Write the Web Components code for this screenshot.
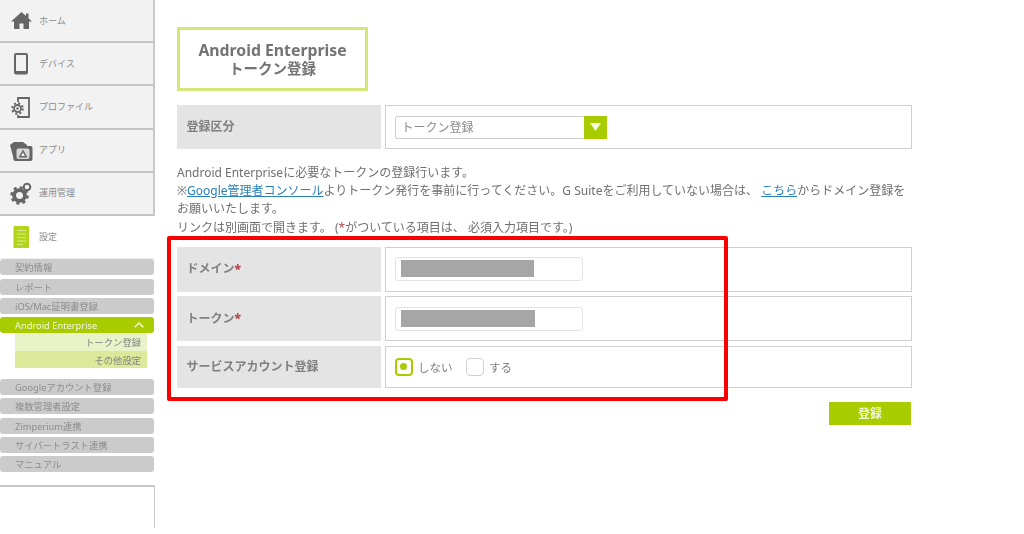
<!DOCTYPE html>
<html lang="ja">
<head>
<meta charset="utf-8">
<title>Android Enterprise トークン登録</title>
<style>
html, body { margin: 0; background: #fff; }
body { font-family: "Noto Sans", "Noto Sans CJK JP", sans-serif; color: #7d7d7d; }
note-text a { color: #2a80b9; text-decoration: underline; }
note-text b { color: #b5484c; font-weight: 400; }
page-title span { font-size: 15.800px; }
</style>
</head>
<body>
<app-shell>
  <side-nav slot="side">
    <nav-item label="ホーム"><svg viewBox="0 0 24 24" width="24" height="24"><path fill="#666" d="M12.500 3 2 12.500h3V20h5.500v-5.500h4V20H20v-7.500h3l-3.500-3.200V4.500h-2.500v2.500z"/></svg></nav-item>
    <nav-item label="デバイス"><svg viewBox="0 0 24 24" width="24" height="24"><rect x="6" y="2" width="12" height="19.500" rx="1" fill="none" stroke="#666" stroke-width="2"/><rect x="7" y="19" width="10" height="2" fill="#666"/></svg></nav-item>
    <nav-item label="プロファイル"><svg viewBox="0 0 24 24" width="24" height="24"><path fill="none" stroke="#666" stroke-width="1.800" d="M9 7V3h11v19H9v-2"/><circle cx="8.500" cy="13.500" r="5.300" fill="none" stroke="#666" stroke-width="2" stroke-dasharray="2.080 2.080"/><circle cx="8.500" cy="13.500" r="3.500" fill="#f2f2f2" stroke="#666" stroke-width="1.800"/><circle cx="8.500" cy="13.500" r="1.200" fill="#666"/></svg></nav-item>
    <nav-item label="アプリ"><svg viewBox="0 0 24 24" width="24" height="24"><path fill="#666" d="M1 7 5 4h9l4 3v3H7l1 12H5z"/><rect x="4.500" y="8" width="19" height="15" rx="2" fill="#666"/><rect x="7.500" y="10.500" width="13" height="10.500" rx="2" fill="#d8d8d8"/><path d="M14 11.500 18.500 19.500h-9z" fill="#666"/><path d="M14 14.500 16 18h-4z" fill="#f2f2f2"/></svg></nav-item>
    <nav-item label="運用管理"><svg viewBox="0 0 24 24" width="24" height="24"><circle cx="10.500" cy="14.500" r="8" fill="none" stroke="#666" stroke-width="2.500" stroke-dasharray="3.140 3.140"/><circle cx="10.500" cy="14.500" r="5.400" fill="none" stroke="#666" stroke-width="3.800"/><circle cx="18" cy="6" r="3.300" fill="none" stroke="#666" stroke-width="2"/></svg></nav-item>
    <nav-item label="設定" current><svg viewBox="0 0 24 24" width="24" height="24"><rect x="4.500" y="1" width="15.500" height="22" rx="1" fill="#b2d41a"/><path stroke="#dbe98c" stroke-width="1.200" d="M8 5.500h9M8 9h9M8 12.500h9M8 16h9M8 19.500h6"/></svg></nav-item>
    <nav-sub>契約情報</nav-sub>
    <nav-sub>レポート</nav-sub>
    <nav-sub>iOS/Mac証明書登録</nav-sub>
    <nav-sub open>Android Enterprise</nav-sub>
    <nav-leaf tone="light">トークン登録</nav-leaf>
    <nav-leaf tone="mid">その他設定</nav-leaf>
    <nav-sub after-group>Googleアカウント登録</nav-sub>
    <nav-sub>複数管理者設定</nav-sub>
    <nav-sub>Zimperium連携</nav-sub>
    <nav-sub>サイバートラスト連携</nav-sub>
    <nav-sub>マニュアル</nav-sub>
    <nav-foot></nav-foot>
  </side-nav>

  <page-title><span>Android Enterprise</span><br>トークン登録</page-title>

  <form-row label="登録区分" height="44">
    <select-box>トークン登録</select-box>
  </form-row>

  <note-text>
    Android Enterpriseに必要なトークンの登録行います。<br>
    ※<a href="#">Google管理者コンソール</a>よりトークン発行を事前に行ってください。G Suiteをご利用していない場合は、 <a href="#">こちら</a>からドメイン登録を<br>
    お願いいたします。<br>
    リンクは別画面で開きます。 (<b>*</b>がついている項目は、 必須入力項目です。)
  </note-text>

  <form-row label="ドメイン" required height="45">
    <text-field mask="133"></text-field>
  </form-row>
  <form-row label="トークン" required height="45">
    <text-field mask="134"></text-field>
  </form-row>
  <form-row label="サービスアカウント登録" height="42">
    <radio-opt checked>しない</radio-opt>
    <radio-opt>する</radio-opt>
  </form-row>

  <submit-button>登録</submit-button>
  <mark-box></mark-box>
</app-shell>

<script>
function shadow(el, html) {
    el.attachShadow({ mode: 'open' }).innerHTML = html;
}

class AppShell extends HTMLElement {
    constructor() {
        super();
        shadow(this, `
        <style>
        :host { display: flex; width: 1024px; height: 534px; overflow: hidden; filter: blur(.4px); }
        .side { flex: 0 0 155px; }
        main { position: relative; flex: 0 0 735px; padding: 27px 0 0 22px; box-sizing: border-box; }
        </style>
        <div class="side"><slot name="side"></slot></div>
        <main><slot></slot></main>`);
    }
}

class SideNav extends HTMLElement {
    constructor() {
        super();
        shadow(this, `
        <style>
        :host { display: block; height: 529px; }
        </style>
        <slot></slot>`);
    }
}

class NavItem extends HTMLElement {
    constructor() {
        super();
        shadow(this, `
        <style>
        :host { display: flex; align-items: center; box-sizing: border-box; height: 43.200px; background: #f2f2f2;
            border-right: 2px solid #c8c8c8; border-bottom: 2px solid #c4c4c4; font-size: 9px; color: #8a8a8a; }
        :host([current]) { background: #fff; border-right: 0; border-bottom: 1px solid #eee; }
        .icon { flex: 0 0 39px; display: flex; justify-content: center; padding-left: 3px; box-sizing: border-box; }
        ::slotted(svg) { display: block; }
        span { padding-bottom: 1px; }
        </style>
        <div class="icon"><slot></slot></div>
        <span>${this.getAttribute('label')}</span>`);
    }
}

class NavSub extends HTMLElement {
    constructor() {
        super();
        const open = this.hasAttribute('open');
        shadow(this, `
        <style>
        :host { display: flex; align-items: center; justify-content: space-between; box-sizing: border-box;
            width: 154px; height: 16px; margin-bottom: 3.400px; padding: 0 10px 0 15px; background: #cbcbcb;
            border-radius: 3px; font-size: 9.300px; color: #8c8c8c; white-space: nowrap; }
        :host([open]) { background: #a9cc00; color: #f4f8dc; margin-bottom: 0; }
        :host([after-group]) { margin-top: 10.600px; }
        svg { display: block; }
        </style>
        <slot></slot>
        ${open ? '<svg width="10" height="6" viewBox="0 0 10 6"><path d="M.7 5.300 5 1l4.300 4.300" fill="none" stroke="#f4f8dc" stroke-width="1.500"/></svg>' : ''}`);
    }
}

class NavLeaf extends HTMLElement {
    constructor() {
        super();
        shadow(this, `
        <style>
        :host { display: flex; align-items: center; justify-content: flex-end; box-sizing: border-box;
            width: 132px; height: 17.500px; margin-left: 15px; padding-right: 6px; font-size: 9.300px; color: #808080; }
        :host([tone=light]) { background: #eaf3c8; }
        :host([tone=mid]) { background: #dde99a; }
        </style>
        <slot></slot>`);
    }
}

class NavFoot extends HTMLElement {
    constructor() {
        super();
        shadow(this, `
        <style>
        :host { display: block; box-sizing: border-box; width: 155px; height: 43px; margin-top: 13px;
            border-top: 2px solid #c8c8c8; border-right: 1.500px solid #c8c8c8; }
        </style>`);
    }
}

class PageTitle extends HTMLElement {
    constructor() {
        super();
        shadow(this, `
        <style>
        :host { display: flex; align-items: center; justify-content: center; box-sizing: border-box;
            width: 191px; height: 64px; margin-bottom: 14px; border: 3px solid #d4e678; text-align: center;
            font-size: 14.500px; line-height: 18px; font-weight: 700; color: #737373; }
        </style>
        <div><slot></slot></div>`);
    }
}

class FormRow extends HTMLElement {
    constructor() {
        super();
        shadow(this, `
        <style>
        :host { display: flex; gap: 4px; width: 735px; height: ${this.getAttribute('height')}px; margin-bottom: 4.500px; }
        .label { flex: 0 0 204px; box-sizing: border-box; display: flex; align-items: center; padding: 0 0 2px 9.500px;
            background: #e4e4e4; font-size: 12px; font-weight: 700; color: #808080; }
        .label b { color: #b5484c; }
        .value { flex: 1; box-sizing: border-box; display: flex; align-items: center; gap: 13px; padding-left: 8.500px;
            border: 1.500px solid #cfcfcf; }
        </style>
        <div class="label">${this.getAttribute('label')}${this.hasAttribute('required') ? '<b>*</b>' : ''}</div>
        <div class="value"><slot></slot></div>`);
    }
}

class SelectBox extends HTMLElement {
    constructor() {
        super();
        shadow(this, `
        <style>
        :host { display: flex; align-items: center; justify-content: space-between; box-sizing: border-box;
            width: 212px; height: 23px; padding-left: 6px; border: 1px solid #cdcdcd; border-radius: 2px;
            font-size: 12px; color: #8c8c8c; }
        .arrow { width: 23px; height: 23px; margin-right: -1px; background: #a9cc00; display: flex; align-items: center; justify-content: center; }
        </style>
        <slot></slot>
        <div class="arrow"><svg width="11" height="8" viewBox="0 0 11 8"><path d="M0 0h11L5.500 8z" fill="#f4f8dc"/></svg></div>`);
    }
}

class TextField extends HTMLElement {
    constructor() {
        super();
        shadow(this, `
        <style>
        :host { display: block; box-sizing: border-box; width: 188px; height: 24px; padding: 2px 5px;
            border: 1px solid #e3e3e3; border-radius: 3px; }
        .mask { width: ${this.getAttribute('mask')}px; height: 17px; background: #a6a6a6; }
        </style>
        <div class="mask"></div>`);
    }
}

class RadioOpt extends HTMLElement {
    constructor() {
        super();
        shadow(this, `
        <style>
        :host { display: flex; align-items: center; gap: 5.500px; font-size: 11.500px; color: #808080; }
        .box { box-sizing: border-box; width: 18px; height: 18px; border: 1.500px solid #d0d0d0; border-radius: 4px;
            display: flex; align-items: center; justify-content: center; }
        :host([checked]) .box { border: 2px solid #a9cc00; }
        :host([checked]) .box::after { content: ""; width: 7px; height: 7px; border-radius: 50%; background: #a9cc00; }
        </style>
        <div class="box"></div><slot></slot>`);
    }
}

class NoteText extends HTMLElement {
    constructor() {
        super();
        shadow(this, `
        <style>
        :host { display: block; width: 735px; height: 89px; padding-top: 14px; box-sizing: border-box; margin-top: -4px;
            margin-bottom: 8px; font-size: 12px; line-height: 18.400px; color: #6f6f6f; white-space: nowrap; }
        </style>
        <slot></slot>`);
    }
}

class SubmitButton extends HTMLElement {
    constructor() {
        super();
        shadow(this, `
        <style>
        :host { display: flex; align-items: center; justify-content: center; box-sizing: border-box;
            width: 82px; height: 23px; margin: 14px 0 0 652px; background: #a9cc00; color: #f0f6cf;
            font-size: 12px; font-weight: 700; }
        </style>
        <slot></slot>`);
    }
}

class MarkBox extends HTMLElement {
    constructor() {
        super();
        shadow(this, `
        <style>
        :host { position: absolute; left: 12px; top: 236px; width: 561px; height: 165px; box-sizing: border-box;
            border: 4px solid #fa0000; border-radius: 2px; pointer-events: none; }
        </style>`);
    }
}

customElements.define('app-shell', AppShell);
customElements.define('side-nav', SideNav);
customElements.define('nav-item', NavItem);
customElements.define('nav-sub', NavSub);
customElements.define('nav-leaf', NavLeaf);
customElements.define('nav-foot', NavFoot);
customElements.define('page-title', PageTitle);
customElements.define('form-row', FormRow);
customElements.define('select-box', SelectBox);
customElements.define('text-field', TextField);
customElements.define('radio-opt', RadioOpt);
customElements.define('note-text', NoteText);
customElements.define('submit-button', SubmitButton);
customElements.define('mark-box', MarkBox);
</script>
</body>
</html>
